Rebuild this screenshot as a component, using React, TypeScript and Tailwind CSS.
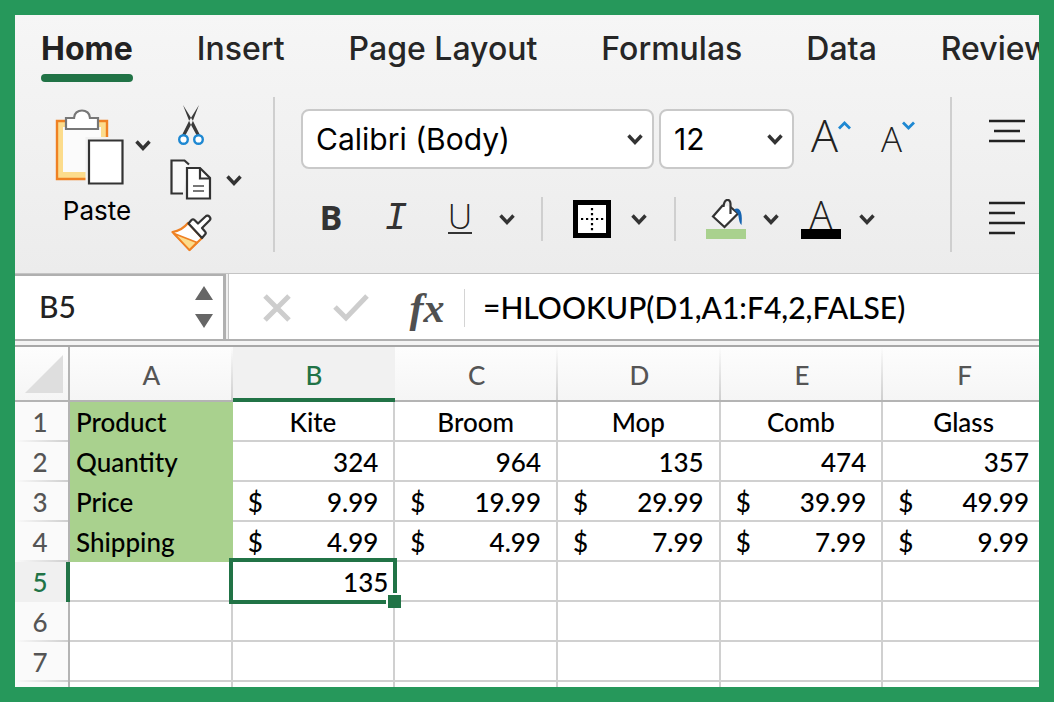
import type { ReactNode } from "react";

const TABS = ["Home", "Insert", "Page Layout", "Formulas", "Data", "Review"];
const COLUMNS = ["A", "B", "C", "D", "E", "F"];

const PRODUCTS = ["Kite", "Broom", "Mop", "Comb", "Glass"];
const QUANTITIES = ["324", "964", "135", "474", "357"];
const PRICES = ["9.99", "19.99", "29.99", "39.99", "49.99"];
const SHIPPING = ["4.99", "4.99", "7.99", "7.99", "9.99"];

function Chevron() {
  return (
    <svg width="16" height="12" viewBox="0 0 16 12" fill="none" stroke="#333" strokeWidth="3.4">
      <path d="M1.5 2.5 L8 9.5 L14.5 2.5" />
    </svg>
  );
}

function ToolButton({ label, className, children }: { label: string; className: string; children: ReactNode }) {
  return (
    <button type="button" aria-label={label} className={`flex shrink-0 items-center justify-center ${className}`}>
      {children}
    </button>
  );
}

function PasteIcon() {
  return (
    <svg width="70" height="76" viewBox="0 0 70 76" fill="none">
      <path d="M2 12 H52 V70 H2 Z" fill="#fcdc8c" stroke="#ef8123" strokeWidth="2.4" />
      <path d="M8 18 H46 V63 H8 Z" fill="#fbfbfb" />
      <path d="M11 9 H19 C19 -1 35 -1 35 9 H43 V20 H11 Z" fill="#fff" stroke="#777" strokeWidth="2.2" />
      <path d="M30.5 28 H70 V76 H30.5 Z" fill="#f2f2f2" />
      <path d="M34 31.5 H67.5 V74.5 H34 Z" fill="#fff" stroke="#333" strokeWidth="2.2" />
    </svg>
  );
}

function ScissorsIcon() {
  return (
    <svg width="26" height="40" viewBox="0 0 26 40" fill="none">
      <path d="M5 0 L15 16 L22 30 L19 31 L12 18 Z M21 0 L11 16 L4 30 L7 31 L14 18 Z" fill="#3a3a3a" />
      <circle cx="5.5" cy="34.5" r="4.3" fill="#fff" stroke="#1e88d2" strokeWidth="2.4" />
      <circle cx="20.5" cy="34.5" r="4.3" fill="#fff" stroke="#1e88d2" strokeWidth="2.4" />
    </svg>
  );
}

function CopyIcon() {
  return (
    <svg width="42" height="41" viewBox="0 0 42 41" fill="none" stroke="#333" strokeWidth="2.2">
      <path d="M13 34.5 H1.5 V1.5 H14.5 L19 5.5" fill="#f8f8f8" />
      <path d="M17 9 H30 L40 19 V39.5 H17 Z" fill="#fff" />
      <path d="M30 9 V19.5 H40" />
      <path d="M23 27 H34 M23 32 H34" stroke="#777" />
    </svg>
  );
}

function BrushIcon() {
  return (
    <svg width="41" height="38" viewBox="0 0 41 38" fill="none" strokeLinejoin="round">
      <path d="M1.5 18 C8 17 13 14 17 9 L31 24 L18.5 36 Z" fill="#fff" stroke="#ef8123" strokeWidth="2.2" />
      <path d="M3 19.5 L26 28.5 L18.5 36 Z" fill="#fcdc8c" stroke="#ef8123" strokeWidth="1.8" />
      <path
        d="M17.5 9.5 L20.5 6 C21.5 5 22.5 5 23.5 6 L27 9.5 L34.5 2.5 C37 0 41 4 38.5 6.5 L31 14 L34 17.5 C35 18.5 35 19.5 34 20.5 L31 24 Z"
        fill="#fff"
        stroke="#333"
        strokeWidth="2.2"
      />
    </svg>
  );
}

function BordersIcon() {
  return (
    <svg width="38" height="38" viewBox="0 0 38 38" fill="none">
      <rect x="2.5" y="2.5" width="33" height="33" fill="#fff" stroke="#000" strokeWidth="5" />
      <path d="M8 19 H31 M19 8 V31" stroke="#000" strokeWidth="2.2" strokeDasharray="2.2 2.8" />
    </svg>
  );
}

function FillIcon() {
  return (
    <svg width="40" height="40" viewBox="0 0 40 40" fill="none">
      <path d="M17 6 L7 17.5 L18.5 28 L32 14.5 L24.5 8" fill="#fff" stroke="#333" strokeWidth="2.2" />
      <path d="M17.5 8 C18 -1 24.5 -1 24.5 5 V15" stroke="#333" strokeWidth="2.2" />
      <path d="M28 10.5 C34 7 37 14 35.5 26 C33 24 33 19 32 15 Z" fill="#1563b0" />
      <rect y="30" width="40" height="10" fill="#a9d18e" />
    </svg>
  );
}

function SizeArrow({ d }: { d: string }) {
  return (
    <svg width="13" height="9" viewBox="0 0 13 9" fill="none" stroke="#1e88d2" strokeWidth="2.8">
      <path d={d} />
    </svg>
  );
}

function Lines({ d, height }: { d: string; height: number }) {
  return (
    <svg width="36" height={height} viewBox={`0 0 36 ${height}`} stroke="#222" strokeWidth="2.4">
      <path d={d} />
    </svg>
  );
}

function PickList({ label, value, className }: { label: string; value: string; className: string }) {
  return (
    <div className={`relative shrink-0 ${className}`}>
      <select
        aria-label={label}
        defaultValue={value}
        className="h-[60px] w-full appearance-none rounded-lg border-2 border-[#c9c9c9] bg-white pl-[13px] text-[30px] text-black"
      >
        <option>{value}</option>
      </select>
      <div className="pointer-events-none absolute inset-y-0 right-[11px] flex items-center">
        <Chevron />
      </div>
    </div>
  );
}

function Ribbon() {
  return (
    <div className="h-[258px] shrink-0 overflow-hidden bg-linear-to-b from-[#f6f6f6] to-[#ececec] font-['Inter',sans-serif]">
      <nav className="flex h-[67px] gap-16 pl-[26px]">
        {TABS.map((tab) => (
          <a
            key={tab}
            href="#"
            className={
              tab === "Home"
                ? "flex shrink-0 flex-col justify-between pt-[14px] text-[32px] leading-10 font-bold text-[#222]"
                : "shrink-0 pt-[14px] text-[32px] leading-10 font-medium text-[#262626]"
            }
          >
            {tab}
            {tab === "Home" && <span className="h-2 w-full rounded-full bg-[#217346]" />}
          </a>
        ))}
      </nav>

      <div className="mt-[15px] flex h-[155px]">
        <div className="flex w-[260px] shrink-0 border-r-2 border-[#cfcfcf] pl-10">
          <div className="flex w-[96px] flex-col pt-3">
            <div className="flex items-center gap-[10px]">
              <ToolButton label="Paste clipboard" className="">
                <PasteIcon />
              </ToolButton>
              <ToolButton label="Paste options" className="pb-1">
                <Chevron />
              </ToolButton>
            </div>
            <button type="button" className="mt-2 w-[84px] text-[26px] leading-9 text-black">
              Paste
            </button>
          </div>
          <div className="ml-[19px] flex flex-col pt-2">
            <ToolButton label="Cut" className="w-[42px]">
              <ScissorsIcon />
            </ToolButton>
            <div className="mt-[14px] flex items-center gap-[14px]">
              <ToolButton label="Copy" className="">
                <CopyIcon />
              </ToolButton>
              <ToolButton label="Copy options" className="">
                <Chevron />
              </ToolButton>
            </div>
            <ToolButton label="Format painter" className="mt-[14px] w-[42px]">
              <BrushIcon />
            </ToolButton>
          </div>
        </div>

        <div className="w-[677px] shrink-0 border-r-2 border-[#cfcfcf] pt-3 pl-[26px]">
          <div className="flex items-center">
            <PickList label="Font" value="Calibri (Body)" className="w-[353px]" />
            <PickList label="Font size" value="12" className="ml-[5px] w-[135px]" />
            <ToolButton
              label="Increase font size"
              className="ml-[17px] h-[60px] pb-2 font-['Open_Sans',sans-serif] text-[45px] leading-[60px] font-light text-[#222]"
            >
              A
              <span className="mb-5">
                <SizeArrow d="M1 7.5 L6.5 2 L12 7.5" />
              </span>
            </ToolButton>
            <ToolButton
              label="Decrease font size"
              className="ml-[30px] h-[60px] font-['Open_Sans',sans-serif] text-[35px] leading-[68px] font-light text-[#222]"
            >
              A
              <span className="mb-7">
                <SizeArrow d="M1 1.5 L6.5 7 L12 1.5" />
              </span>
            </ToolButton>
          </div>

          <div className="mt-[26px] flex h-12 items-center text-[#333]">
            <ToolButton label="Bold" className="w-[60px] pb-1 font-['Open_Sans',sans-serif] text-[34px] leading-10 font-bold">
              B
            </ToolButton>
            <ToolButton label="Italic" className="w-[70px] font-['Liberation_Mono',monospace] text-[38px] leading-10 italic">
              I
            </ToolButton>
            <ToolButton label="Underline" className="w-[58px] pb-1 font-['Open_Sans',sans-serif] text-[34px] font-light text-[#222]">
              <span className="border-b-2 border-[#333] leading-8">U</span>
            </ToolButton>
            <ToolButton label="Underline options" className="w-9">
              <Chevron />
            </ToolButton>
            <div className="mx-4 h-11 w-[2px] bg-[#cfcfcf]" />
            <ToolButton label="Borders" className="w-[66px]">
              <BordersIcon />
            </ToolButton>
            <ToolButton label="Border options" className="w-7">
              <Chevron />
            </ToolButton>
            <div className="mx-[21px] h-11 w-[2px] bg-[#cfcfcf]" />
            <ToolButton label="Fill color" className="w-[58px]">
              <FillIcon />
            </ToolButton>
            <ToolButton label="Fill options" className="w-8">
              <Chevron />
            </ToolButton>
            <ToolButton label="Font color" className="w-[68px] font-['Open_Sans',sans-serif] text-[38px] font-light text-[#222]">
              <span className="w-10 border-b-10 border-black leading-[30px]">A</span>
            </ToolButton>
            <ToolButton label="Font color options" className="w-6">
              <Chevron />
            </ToolButton>
          </div>
        </div>

        <div className="flex flex-col items-start pt-[22px] pl-[37px]">
          <ToolButton label="Middle align" className="">
            <Lines height={26} d="M0 2 H36 M5 12 H31 M0 22 H36" />
          </ToolButton>
          <ToolButton label="Align left" className="mt-[55px]">
            <Lines height={36} d="M0 3 H36 M0 13 H26 M0 23 H36 M0 33 H26" />
          </ToolButton>
        </div>
      </div>
    </div>
  );
}

function FormulaBar() {
  return (
    <div className="flex h-[68px] shrink-0 border-t border-b-2 border-t-[#c4c4c4] border-b-[#b0b0b0] bg-white font-['Lato',sans-serif] font-medium">
      <div className="flex w-[211px] shrink-0 items-center border-t-2 border-r-3 border-[#b0b0b0] pr-[10px] pb-[2px] pl-6">
        <input aria-label="Name box" defaultValue="B5" className="min-w-0 flex-1 text-[30px] text-[#222]" />
        <svg width="18" height="42" viewBox="0 0 18 42" fill="#666">
          <path d="M9 0 L18 14 H0 Z M0 28 H18 L9 42 Z" />
        </svg>
      </div>
      <div className="w-[3px] shrink-0 border-r border-[#c4c4c4] bg-[#f0f0f0]" />
      <div className="flex min-w-0 flex-1 items-center pt-[2px] pl-[34px]">
        <ToolButton label="Cancel" className="">
          <svg width="28" height="28" viewBox="0 0 28 28" stroke="#cdcdcd" strokeWidth="5">
            <path d="M2 2 L26 26 M26 2 L2 26" />
          </svg>
        </ToolButton>
        <ToolButton label="Enter" className="ml-[42px]">
          <svg width="36" height="28" viewBox="0 0 36 28" fill="none" stroke="#cdcdcd" strokeWidth="5">
            <path d="M2 13 L13 24 L34 2" />
          </svg>
        </ToolButton>
        <ToolButton
          label="Insert function"
          className="ml-[29px] h-11 w-[58px] font-['Liberation_Serif',serif] text-[42px] leading-10 font-bold text-[#505050] italic"
        >
          fx
        </ToolButton>
        <div className="mr-[18px] ml-2 h-[38px] w-px bg-[#d4d4d4]" />
        <input
          aria-label="Formula"
          defaultValue="=HLOOKUP(D1,A1:F4,2,FALSE)"
          className="min-w-0 flex-1 text-[30px] text-black"
        />
      </div>
    </div>
  );
}

function RowHeader({ row }: { row: number }) {
  return (
    <th
      scope="row"
      className={
        row === 5
          ? "border-r-4 border-[#217346] bg-[#f0f0f0] pr-px font-medium text-[#217346]"
          : "border-r-2 border-[#b4b4b4] bg-[#fafafa] bg-[linear-gradient(to_right,transparent,#cfcfcf)] bg-[length:100%_2px] bg-bottom bg-no-repeat pr-[3px] font-medium text-[#555]"
      }
    >
      {row}
    </th>
  );
}

function LabelCell({ children }: { children: ReactNode }) {
  return <td className="bg-[#a9d18e] pl-[6px]">{children}</td>;
}

const CELL = "border-r-2 border-b-2 border-[#d0d0d0] pt-[2px]";

function MoneyCell({ value }: { value: string }) {
  return (
    <td className={CELL}>
      <div className="flex justify-between px-[15px]">
        <span>$</span>
        <span>{value}</span>
      </div>
    </td>
  );
}

function EmptyCells({ row, columns }: { row: number; columns: string[] }) {
  return columns.map((column) => <td key={`${column}${row}`} className={CELL} />);
}

function Sheet() {
  return (
    <div className="min-h-0 flex-1 overflow-hidden border-t-2 border-[#a8a8a8] bg-white">
      <table className="w-[calc(100%+7px)] table-fixed border-separate border-spacing-0 font-['Lato',sans-serif] text-[26px] leading-9 font-medium text-black">
        <thead>
          <tr className="h-[55px] bg-linear-to-b from-[#fdfdfd] to-[#f5f5f5]">
            <th className="w-[55px] border-r-2 border-b-2 border-[#b4b4b4]">
              <svg width="38" height="38" viewBox="0 0 38 38" fill="#dedede" className="ml-[10px]">
                <path d="M38 0 V38 H0 Z" />
              </svg>
            </th>
            {COLUMNS.map((column) => (
              <th
                key={column}
                scope="col"
                className={
                  column === "B"
                    ? "border-b-4 border-[#217346] bg-[#f1f1f1] pt-1 font-medium text-[#217346]"
                    : "border-b-2 border-[#b4b4b4] bg-[linear-gradient(to_bottom,transparent,#cfcfcf)] bg-[length:2px_100%] bg-right bg-no-repeat pt-[2px] font-medium text-[#555]"
                }
              >
                {column}
              </th>
            ))}
          </tr>
        </thead>
        <tbody>
          <tr className="h-10">
            <RowHeader row={1} />
            <LabelCell>Product</LabelCell>
            {PRODUCTS.map((name) => (
              <td key={name} className={`${CELL} text-center`}>
                {name}
              </td>
            ))}
          </tr>
          <tr className="h-10">
            <RowHeader row={2} />
            <LabelCell>Quantity</LabelCell>
            {QUANTITIES.map((quantity) => (
              <td key={quantity} className={`${CELL} pr-[15px] text-right`}>
                {quantity}
              </td>
            ))}
          </tr>
          <tr className="h-10">
            <RowHeader row={3} />
            <LabelCell>Price</LabelCell>
            {PRICES.map((price, index) => (
              <MoneyCell key={COLUMNS[index + 1]} value={price} />
            ))}
          </tr>
          <tr className="h-10">
            <RowHeader row={4} />
            <LabelCell>Shipping</LabelCell>
            {SHIPPING.map((price, index) => (
              <MoneyCell key={COLUMNS[index + 1]} value={price} />
            ))}
          </tr>
          <tr className="h-10">
            <RowHeader row={5} />
            <EmptyCells row={5} columns={["A"]} />
            <td className={`${CELL} relative pr-[5px] text-right`}>
              135
              <span className="pointer-events-none absolute -inset-1 border-4 border-[#217346]" />
              <span className="absolute -right-2 -bottom-2 size-[15px] border-2 border-r-0 border-b-0 border-white bg-[#217346]" />
            </td>
            <EmptyCells row={5} columns={["C", "D", "E", "F"]} />
          </tr>
          {[6, 7].map((row) => (
            <tr key={row} className="h-10">
              <RowHeader row={row} />
              <EmptyCells row={row} columns={COLUMNS} />
            </tr>
          ))}
          <tr className="h-10">
            <td className="border-r-2 border-[#b4b4b4] bg-[#fafafa]" />
            <EmptyCells row={8} columns={COLUMNS} />
          </tr>
        </tbody>
      </table>
    </div>
  );
}

export default function App() {
  return (
    <div className="h-screen bg-[#26985b] p-[15px]">
      <div className="flex h-full flex-col overflow-hidden bg-[#f4f4f4]">
        <Ribbon />
        <FormulaBar />
        <div className="h-1 shrink-0" />
        <Sheet />
      </div>
    </div>
  );
}
